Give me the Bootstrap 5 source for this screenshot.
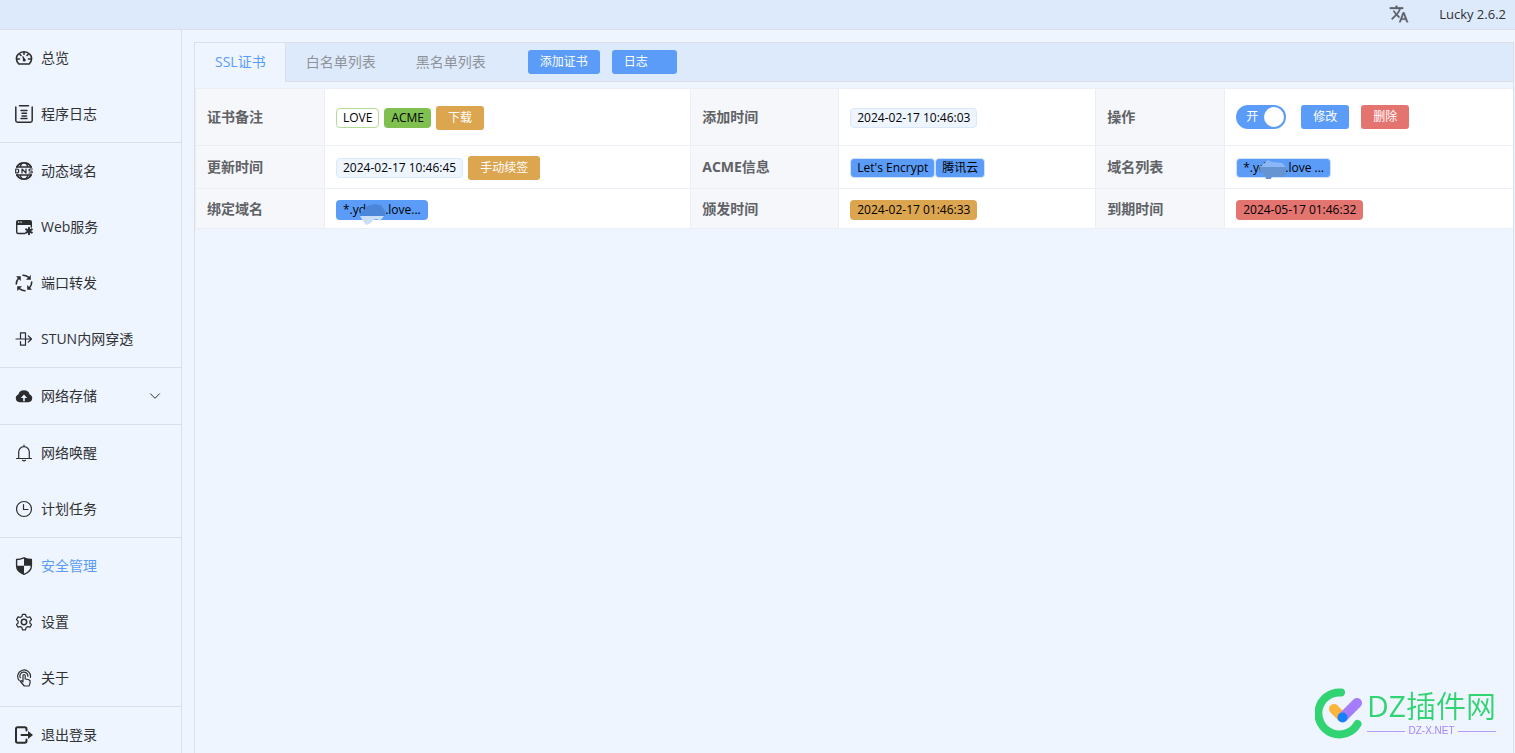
<!DOCTYPE html>
<html lang="zh-CN">
<head>
<meta charset="utf-8">
<meta name="viewport" content="width=device-width, initial-scale=1">
<title>Lucky 2.6.2</title>
<link rel="stylesheet" href="https://cdn.jsdelivr.net/npm/bootstrap@5.3.0/dist/css/bootstrap.min.css">
<style>
:root{--page:#eef5ff;--bar:#ddeafc;--line:#dcdfe6;--cell:#ebeef5;--blue:#5b9cf8;--amber:#dca550;--red:#e47470;--green:#7fc050;--ink:#303133}
body{font-family:"Open Sans","Noto Sans CJK SC",sans-serif;font-size:14px;line-height:20px;color:var(--ink);background:var(--page)}
.topbar{height:30px;background:var(--bar);border-bottom:1px solid var(--line);padding:0 9px 2px 0;gap:30px;font-size:13px}
.topbar button{color:#5c5f66;height:20px}
.sidebar{width:182px;border-right:1px solid var(--line)}
.sidebar ul+ul{border-top:1px solid var(--line)}
.menu-link{height:56px;padding:0 20px 0 15px;gap:8px;color:var(--ink);text-decoration:none}
.menu-link:hover,.menu-link.active span{color:var(--blue)}
.menu-link svg{width:18px;height:18px;flex:none;color:#2c2d2f}
.menu-link .chevron{width:12px;height:12px;margin-left:auto}
.ln{fill:none;stroke:currentColor;stroke-linecap:round;stroke-linejoin:round}
main{padding:12px 1px 0 12px;min-width:0}
.panel{border:1px solid var(--line);border-bottom:0}
.tabbar{height:38px;background:var(--bar);border-bottom:1px solid var(--line);box-sizing:content-box}
.tabbar .tab{border:0;background:none;padding:0 20px;height:38px;color:#909399}
.tabbar .tab.active{background:var(--page);color:var(--blue);border-right:1px solid var(--line);height:39px;padding:0 19px 1px 20px}
.tools{margin:7px 0 0 22px;gap:12px}
.btn-s{height:24px;border:0;border-radius:3px;padding:0 12px;font-size:12px;line-height:24px;color:#fff;white-space:nowrap}
.btn-log{width:65px;text-align:left}
.bg-b{background:var(--blue)}.bg-a{background:var(--amber)}.bg-r{background:var(--red)}.bg-g{background:var(--green)}
.info{margin:6px 0 0;table-layout:fixed;width:100%;border-collapse:collapse;background:#fff}
.info th,.info td{border:1px solid var(--cell);padding:0 11px;vertical-align:middle}
.info td{padding-top:2px}
.info tr>:last-child{border-right:0}
.info th{background:#f5f7fa;color:#606266;font-weight:700}
.c1{width:129px}.c2{width:27.8%}.c3{width:148px}.c4{width:19.5%}.c5{width:129px}
.r1{height:57px}.r2{height:43px}.r3{height:40px}
.chip{display:inline-flex;align-items:center;height:20px;border-radius:4px;padding:0 6px;font-size:12px;line-height:18px;color:#000;border:1px solid transparent;white-space:nowrap}
.chip-plain{border-color:#b3dc98;background:#fff}
.chip-soft{background:var(--page);border-color:#d9e8fd}
.chip-ring{background:var(--blue);border-color:#d0e2fc}
.chips{gap:5px}
.smudge{position:relative;width:19px;height:18px}
.smudge svg{position:absolute;left:-7px;top:0;width:28px;height:24px}
.switch{position:relative;margin-right:15px}
.switch input{appearance:none;display:block;width:50px;height:24px;margin:0;border-radius:12px;background:#b5b8be}
.switch input:checked{background:var(--blue)}
.switch input::after{content:"";display:block;width:20px;height:20px;margin:2px 2px 2px auto;border-radius:50%;background:#fff}
.switch span{position:absolute;left:10px;top:2px;font-size:12px;color:#fff}
.brand{position:fixed;right:19px;bottom:14px;gap:4px}
.brand-name{font-size:30px;line-height:38px;font-weight:350;color:#32d373;white-space:nowrap}
.brand-sub{font-family:"Liberation Sans",sans-serif;font-size:10px;line-height:12px;color:#a584fb;gap:3px;margin-bottom:2px}
.brand-sub::before,.brand-sub::after{content:"";height:1px;background:#b39bfb;flex:1}
</style>
</head>
<body class="vh-100 overflow-hidden d-flex flex-column">
<header class="topbar d-flex justify-content-end align-items-center flex-shrink-0">
<button type="button" class="btn p-0 border-0 d-flex" aria-label="切换语言"><svg width="20" height="20" viewBox="0 0 24 24" fill="currentColor" stroke="currentColor" stroke-width=".3"><path d="M12.900 15.100l-2.600-2.500.03-.03A17.500 17.500 0 0 0 14.100 6H17V4h-7V2H8v2H1v2h11.200C11.500 7.900 10.400 9.700 9 11.300 8.100 10.300 7.300 9.200 6.700 8h-2c.7 1.600 1.700 3.200 3 4.600l-5.100 5L4 19l5-5 3.100 3.100.8-2zM18.500 10h-2L12 22h2l1.100-3h4.800l1.100 3h2l-4.500-12zm-2.600 7l1.600-4.300 1.600 4.300h-3.200z"/></svg></button>
<span>Lucky 2.6.2</span>
</header>
<div class="d-flex flex-grow-1 overflow-hidden">
<nav class="sidebar flex-shrink-0 overflow-hidden" aria-label="主菜单">
<ul class="list-unstyled mb-0">
<li><a class="menu-link d-flex align-items-center" href="#"><svg viewBox="0 0 18 18" class="ln" stroke-width="1.600"><path d="M3.800 15C.6 12 .8 7.500 3.300 5.200a8 8 0 0 1 11.400 0C17.200 7.500 17.400 12 14.200 15z"/><path d="M9 3.500v1.800M5 5.500l1 1M13 5.500l-1 1M2.500 10h2M13.500 10h2M8 8l1.500 3"/><circle cx="9.200" cy="11" r=".7"/></svg><span>总览</span></a></li>
<li><a class="menu-link d-flex align-items-center" href="#"><svg viewBox="0 0 18 18" class="ln" stroke-width="1.500"><path d="M4.500.8h9M.8 2v13.500q0 1.700 1.700 1.700h13q1.700 0 1.700-1.700V2M6 5.500h6M7 8.300h4.500M7 11h4.500M6 13.500h6"/></svg><span>程序日志</span></a></li>
</ul>
<ul class="list-unstyled mb-0">
<li><a class="menu-link d-flex align-items-center" href="#"><svg viewBox="0 0 18 18" class="ln" stroke-width="1.300"><path d="M1.800 5a8.400 8.400 0 0 1 14.400 0M1.800 13a8.400 8.400 0 0 0 14.400 0" stroke-width="1.700"/><path d="M7 1.500Q5.500 3 5.200 5M11 1.500Q12.500 3 12.800 5M7 16.500Q5.500 15 5.200 13M11 16.500Q12.500 15 12.800 13M2 5h14M2 13h14"/><path stroke-width="1.200" d="M.7 7v4h1q2 0 2-2t-2-2zM7 11V7l4 4V7M17.300 7h-2.300q-1 0-1 1t1 1h1.300q1 0 1 1t-1 1H14"/></svg><span>动态域名</span></a></li>
<li><a class="menu-link d-flex align-items-center" href="#"><svg viewBox="0 0 18 18"><path fill="currentColor" fill-rule="evenodd" d="M3 2h12q2 0 2 2v3H1V4q0-2 2-2zm0 1.500v1.300h1.300V3.500zm2.400 0v1.300h1.300V3.500z"/><path class="ln" stroke-width="1.400" d="M1.700 6.500V14q0 1.500 1.500 1.500H10M16.300 6.500v2.500"/><path class="ln" stroke-width="2" d="M14 9.800v6.400M11.200 11.400l5.600 3.200M16.800 11.400l-5.600 3.200"/></svg><span>Web服务</span></a></li>
<li><a class="menu-link d-flex align-items-center" href="#"><svg viewBox="0 0 18 18"><path class="ln" stroke-width="1.600" d="M8 1.300q3 0 5.300 1.900M1.300 10q0-3.300 2-5.600M10 16.700q-3 0-5.300-1.900M16.700 8q0 3.300-2 5.600"/><path fill="currentColor" d="M15.800 1v4.800H11zM1 2.200h4.800V7zM2.200 17v-4.800H7zM17 15.800h-4.800V11z"/></svg><span>端口转发</span></a></li>
<li><a class="menu-link d-flex align-items-center" href="#"><svg viewBox="0 0 18 18" class="ln" stroke-width="1.200"><path d="M1 9h15.300M13.300 5.800L16.500 9l-3.200 3.200M5.500 6.500V2.800h5v3.700M5.500 11.500v3.700h5v-3.700M5.500 6.500V9M10.500 6.500v5"/></svg><span>STUN内网穿透</span></a></li>
</ul>
<ul class="list-unstyled mb-0">
<li><a class="menu-link d-flex align-items-center" href="#"><svg viewBox="0 0 18 18"><path fill="currentColor" fill-rule="evenodd" d="M4.500 15.200A4 4 0 0 1 3.300 7.500 6 6 0 0 1 14.700 7.500a4 4 0 0 1-1.200 7.700zM9 7.500L5.800 11h2.400v3.300h1.600V11h2.400z"/></svg><span>网络存储</span><svg class="chevron ln" viewBox="0 0 12 12"><path d="M1.500 3.800L6 8.300l4.500-4.500"/></svg></a></li>
</ul>
<ul class="list-unstyled mb-0">
<li><a class="menu-link d-flex align-items-center" href="#"><svg viewBox="0 0 18 18" class="ln" stroke-width="1.200"><path d="M1.500 14.500h15M3.700 14.500V8a5.300 5.300 0 0 1 10.600 0v6.500M9 2.500V1.200M7.500 16.300q1.500 1.300 3 0"/></svg><span>网络唤醒</span></a></li>
<li><a class="menu-link d-flex align-items-center" href="#"><svg viewBox="0 0 18 18" class="ln" stroke-width="1.200"><circle cx="9" cy="9" r="7.500"/><path d="M8.500 4.500v5h4.500"/></svg><span>计划任务</span></a></li>
</ul>
<ul class="list-unstyled mb-0">
<li><a class="menu-link active d-flex align-items-center" href="#"><svg viewBox="0 0 18 18"><path class="ln" stroke-width="1.400" d="M9 .8q4 1.600 7.400 1.700v6.200q0 5.800-7.400 8.600Q1.600 14.500 1.600 8.700V2.500Q5 2.400 9 .8z"/><path fill="currentColor" d="M9 .8v8h7.400V2.500Q13 2.400 9 .8zM9 8.800H1.600Q2 14.500 9 17.300z"/></svg><span>安全管理</span></a></li>
<li><a class="menu-link d-flex align-items-center" href="#"><svg viewBox="0 0 18 18" class="ln" stroke-width="1.200"><path d="M7.500 1.300h3l.6 2.200 1.700 1 2.200-.6 1.500 2.600-1.600 1.600v1.900l1.600 1.600-1.500 2.600-2.200-.6-1.700 1-.6 2.200h-3l-.6-2.200-1.700-1-2.200.6-1.500-2.600 1.600-1.600V8.100L1.500 6.500 3 3.900l2.200.6 1.700-1z"/><circle cx="9" cy="9" r="2.700" stroke-width="1.500"/></svg><span>设置</span></a></li>
<li><a class="menu-link d-flex align-items-center" href="#"><svg viewBox="0 0 18 18" class="ln" stroke-width="1.200"><path d="M4.300 11.600A6.400 6.400 0 1 1 15.400 8.500M5.300 8.800a4 4 0 1 1 7.600-1.500"/><path d="M8 12V6.700q0-1.200 1.100-1.200t1.100 1.200V10q3.500.2 4.800 1.500.7 3-1 5.500H9.300L5.500 12.500Q6 10.800 8 12.800"/></svg><span>关于</span></a></li>
</ul>
<ul class="list-unstyled mb-0">
<li><a class="menu-link d-flex align-items-center" href="#"><svg viewBox="0 0 18 18"><path class="ln" stroke-width="2" d="M11.500 4.500V3q0-1.700-1.700-1.700H2.700Q1 1.300 1 3v12q0 1.700 1.700 1.700h7.100q1.700 0 1.700-1.700v-1.500M6.500 9H14"/><path fill="currentColor" d="M13 5l5 4-5 4z"/></svg><span>退出登录</span></a></li>
</ul>
</nav>
<main class="flex-grow-1 d-flex flex-column">
<section class="panel flex-grow-1">
<div class="tabbar d-flex align-items-start">
<div class="d-flex" role="tablist">
<button type="button" role="tab" aria-selected="true" class="tab active">SSL证书</button>
<button type="button" role="tab" aria-selected="false" class="tab">白名单列表</button>
<button type="button" role="tab" aria-selected="false" class="tab">黑名单列表</button>
</div>
<div class="d-flex tools">
<button type="button" class="btn-s bg-b">添加证书</button>
<button type="button" class="btn-s bg-b btn-log">日志</button>
</div>
</div>
<table class="info">
<colgroup><col class="c1"><col class="c2"><col class="c3"><col class="c4"><col class="c5"><col></colgroup>
<tbody>
<tr class="r1">
<th scope="row">证书备注</th>
<td><div class="d-flex align-items-center chips"><span class="chip chip-plain">LOVE</span><span class="chip bg-g">ACME</span><button type="button" class="btn-s bg-a">下载</button></div></td>
<th scope="row">添加时间</th>
<td><div class="d-flex"><span class="chip chip-soft">2024-02-17 10:46:03</span></div></td>
<th scope="row">操作</th>
<td class="pt-0"><div class="d-flex align-items-center"><label class="switch"><input type="checkbox" role="switch" checked><span>开</span></label><button type="button" class="btn-s bg-b me-2">修改</button><button type="button" class="btn-s bg-r ms-1">删除</button></div></td>
</tr>
<tr class="r2">
<th scope="row">更新时间</th>
<td><div class="d-flex align-items-center chips"><span class="chip chip-soft">2024-02-17 10:46:45</span><button type="button" class="btn-s bg-a">手动续签</button></div></td>
<th scope="row">ACME信息</th>
<td><div class="d-flex"><span class="chip chip-ring">Let's Encrypt</span><span class="chip chip-ring">腾讯云</span></div></td>
<th scope="row">域名列表</th>
<td><div class="d-flex"><span class="chip chip-ring">*.yd<span class="smudge"><svg viewBox="0 0 28 24"><path fill="#6694d3" d="M1 7h26v9l-3 2h-6l-5-1-1 3H7l-1-4-5-4z"/><path fill="#8ab7f7" d="M1 8l8-7 4 2 10 1 4 4z"/></svg></span>.love ...</span></div></td>
</tr>
<tr class="r3">
<th scope="row">绑定域名</th>
<td><div class="d-flex"><span class="chip bg-b">*.yd<span class="smudge"><svg viewBox="0 0 28 24"><path fill="#4c86d8" d="M1 12l4-3 3-4 7-2 7 1 4 6v5H1z"/><path fill="#c9dffc" d="M1 15h24l-4 5-3-2-4 1-2 3-5 2-3-4z"/></svg></span>.love...</span></div></td>
<th scope="row">颁发时间</th>
<td><div class="d-flex"><span class="chip bg-a">2024-02-17 01:46:33</span></div></td>
<th scope="row">到期时间</th>
<td><div class="d-flex"><span class="chip bg-r">2024-05-17 01:46:32</span></div></td>
</tr>
</tbody>
</table>
</section>
</main>
</div>
<div class="brand d-flex align-items-center">
<svg width="48" height="52" viewBox="0 0 48 52" class="ln"><path stroke="#32d373" stroke-width="8" d="M26 5.500A21 21 0 1 0 42.500 37"/><path stroke="#fcb63c" stroke-width="10" d="M19 22l8 8"/><path stroke="#a37dfc" stroke-width="10" d="M42 16L28 30"/><circle cx="27.500" cy="30.500" r="5" fill="#1680fa" stroke="none"/></svg>
<div><div class="brand-name"><span class="fw-normal">DZ</span>插件网</div><div class="brand-sub d-flex align-items-center">DZ-X.NET</div></div>
</div>
<script src="https://cdn.jsdelivr.net/npm/bootstrap@5.3.0/dist/js/bootstrap.bundle.min.js"></script>
</body>
</html>
